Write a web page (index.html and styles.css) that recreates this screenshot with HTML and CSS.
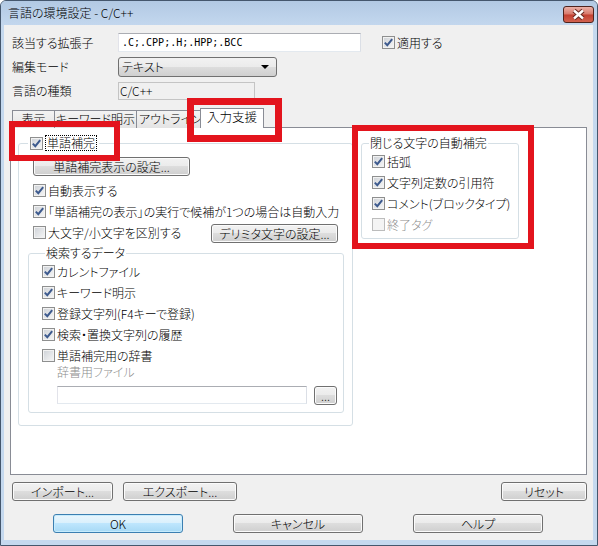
FILE: index.html
```html
<!DOCTYPE html>
<html lang="ja">
<head>
    <meta charset="UTF-8">
    <title>言語の環境設定 - C/C++</title>
    <link rel="stylesheet" href="styles.css">
</head>
<body>
    <div class="window">
        <div class="titlebar">
            <span class="title">言語の環境設定 - C/C++</span>
            <span class="close">
                <svg width="29" height="15" viewBox="0 0 29 15">
                    <path d="M10 3.5 L19 11.5 M19 3.5 L10 11.5" stroke="#6a2a22" stroke-width="4.5"/>
                    <path d="M10 3.5 L19 11.5 M19 3.5 L10 11.5" stroke="#fff" stroke-width="2.4"/>
                </svg>
            </span>
        </div>
        <div class="frame">
            <div class="client">
                <div class="fields">
                    <div class="row">
                        <span class="label">該当する拡張子</span>
                        <div class="textbox ext">.C;.CPP;.H;.HPP;.BCC</div>
                        <label class="check apply"><span class="cb"><svg width="11" height="11" viewBox="0 0 11 11"><path d="M1.8 5.6 L4.3 8.2 L9.2 2.2" fill="none" stroke="#3d5a8e" stroke-width="2"/></svg></span>適用する</label>
                    </div>
                    <div class="row">
                        <span class="label">編集モード</span>
                        <div class="combo"><span>テキスト</span><span class="arrow"></span></div>
                    </div>
                    <div class="row">
                        <span class="label">言語の種類</span>
                        <div class="readonly">C/C++</div>
                    </div>
                </div>

                <div class="tabs">
                    <div class="tab tab-view">表示</div>
                    <div class="tab tab-keyword">キーワード明示</div>
                    <div class="tab tab-outline">アウトライン</div>
                    <div class="tab tab-input active">入力支援</div>
                </div>

                <div class="panel">
                    <fieldset class="group group-word">
                        <legend>
                            <label class="check"><span class="cb"><svg width="11" height="11" viewBox="0 0 11 11"><path d="M1.8 5.6 L4.3 8.2 L9.2 2.2" fill="none" stroke="#3d5a8e" stroke-width="2"/></svg></span><span class="focus">単語補完</span></label>
                        </legend>
                        <button class="btn btn-wide">単語補完表示の設定...</button>
                        <div class="opts">
                            <label class="check"><span class="cb"><svg width="11" height="11" viewBox="0 0 11 11"><path d="M1.8 5.6 L4.3 8.2 L9.2 2.2" fill="none" stroke="#3d5a8e" stroke-width="2"/></svg></span>自動表示する</label>
                            <label class="check"><span class="cb"><svg width="11" height="11" viewBox="0 0 11 11"><path d="M1.8 5.6 L4.3 8.2 L9.2 2.2" fill="none" stroke="#3d5a8e" stroke-width="2"/></svg></span>「単語補完の表示」の実行で候補が1つの場合は自動入力</label>
                            <div class="check">
                                <span class="cb"></span>大文字/小文字を区別する
                                <button class="btn btn-delim">デリミタ文字の設定...</button>
                            </div>
                        </div>

                        <fieldset class="group group-search">
                            <legend>検索するデータ</legend>
                            <label class="check"><span class="cb"><svg width="11" height="11" viewBox="0 0 11 11"><path d="M1.8 5.6 L4.3 8.2 L9.2 2.2" fill="none" stroke="#3d5a8e" stroke-width="2"/></svg></span>カレントファイル</label>
                            <label class="check"><span class="cb"><svg width="11" height="11" viewBox="0 0 11 11"><path d="M1.8 5.6 L4.3 8.2 L9.2 2.2" fill="none" stroke="#3d5a8e" stroke-width="2"/></svg></span>キーワード明示</label>
                            <label class="check"><span class="cb"><svg width="11" height="11" viewBox="0 0 11 11"><path d="M1.8 5.6 L4.3 8.2 L9.2 2.2" fill="none" stroke="#3d5a8e" stroke-width="2"/></svg></span>登録文字列(F4キーで登録)</label>
                            <label class="check"><span class="cb"><svg width="11" height="11" viewBox="0 0 11 11"><path d="M1.8 5.6 L4.3 8.2 L9.2 2.2" fill="none" stroke="#3d5a8e" stroke-width="2"/></svg></span>検索・置換文字列の履歴</label>
                            <label class="check"><span class="cb"></span>単語補完用の辞書</label>
                            <div class="dict-label">辞書用ファイル</div>
                            <div class="dict-row">
                                <div class="textbox dict-input"></div>
                                <button class="btn btn-browse" disabled>...</button>
                            </div>
                        </fieldset>
                    </fieldset>

                    <fieldset class="group group-close">
                        <legend>閉じる文字の自動補完</legend>
                        <label class="check"><span class="cb"><svg width="11" height="11" viewBox="0 0 11 11"><path d="M1.8 5.6 L4.3 8.2 L9.2 2.2" fill="none" stroke="#3d5a8e" stroke-width="2"/></svg></span>括弧</label>
                        <label class="check"><span class="cb"><svg width="11" height="11" viewBox="0 0 11 11"><path d="M1.8 5.6 L4.3 8.2 L9.2 2.2" fill="none" stroke="#3d5a8e" stroke-width="2"/></svg></span>文字列定数の引用符</label>
                        <label class="check"><span class="cb"><svg width="11" height="11" viewBox="0 0 11 11"><path d="M1.8 5.6 L4.3 8.2 L9.2 2.2" fill="none" stroke="#3d5a8e" stroke-width="2"/></svg></span>コメント(ブロックタイプ)</label>
                        <label class="check disabled"><span class="cb"></span>終了タグ</label>
                    </fieldset>
                </div>

                <div class="footer-top">
                    <button class="btn btn-import">インポート...</button>
                    <button class="btn btn-export">エクスポート...</button>
                    <button class="btn btn-reset">リセット</button>
                </div>
                <div class="footer-bottom">
                    <button class="btn btn-main default">OK</button>
                    <button class="btn btn-main">キャンセル</button>
                    <button class="btn btn-main">ヘルプ</button>
                </div>
            </div>
        </div>

        <!-- annotation boxes -->
        <div class="mark mark-word"></div>
        <div class="mark mark-tab"></div>
        <div class="mark mark-close"></div>
    </div>
</body>
</html>
```

FILE: styles.css
```css
* {
    box-sizing: border-box;
}
body {
    margin: 0;
    font-family: "Noto Sans CJK JP", "Noto Sans", sans-serif;
    font-size: 12px;
    font-weight: 300;
    font-feature-settings: "palt";
    color: #000;
    background: #fff;
}
.window {
    position: relative;
    width: 598px;
    height: 546px;
    border: 1px solid #45576d;
    border-radius: 6px 6px 0 0;
    background: #c5d9ef;
    overflow: hidden;
}
.titlebar {
    height: 24px;
    display: flex;
    align-items: center;
    justify-content: space-between;
    padding: 0 3px 0 7px;
    background: linear-gradient(#b2c9e3, #c3d7ee);
}
.title {
    font-size: 12px;
    line-height: 16px;
}
.close {
    width: 31px;
    height: 17px;
    margin-top: 2px;
    border: 1px solid #4e231d;
    border-radius: 3px;
    background: linear-gradient(#eab1a7, #d8786a 48%, #c33f30 52%, #d2624f);
    display: flex;
}
.frame {
    padding: 0 4px 5px 3px;
}
.client {
    height: 515px;
    background: #f0f0f0;
    padding: 0 6px;
}

/* top fields */
.fields {
    padding: 8px 0 0 2px;
    display: flex;
    flex-direction: column;
    gap: 5px;
}
.row {
    display: flex;
    align-items: center;
    height: 19px;
}
.label {
    width: 106px;
    line-height: 16px;
}
.textbox {
    height: 19px;
    background: #fff;
    border: 1px solid;
    border-color: #abadb3 #dbdfe6 #e3e9ef #e2e3ea;
    padding: 0 3px;
    line-height: 17px;
}
.ext {
    width: 243px;
    font-family: "DejaVu Sans Mono", monospace;
    font-size: 10px;
    font-weight: normal;
}
.apply {
    margin-left: 21px;
}
.combo {
    width: 159px;
    height: 20px;
    border: 1px solid #707070;
    border-radius: 3px;
    background: linear-gradient(#f2f2f2, #ebebeb 49%, #dddddd 50%, #cfcfcf);
    display: flex;
    align-items: center;
    justify-content: space-between;
    padding: 0 7px 0 3px;
    line-height: 16px;
}
.arrow {
    border-left: 4px solid transparent;
    border-right: 4px solid transparent;
    border-top: 4px solid #000;
}
.readonly {
    width: 137px;
    height: 18px;
    border: 1px solid #c4c4c4;
    padding: 0 1px;
    line-height: 16px;
}

/* tabs */
.tabs {
    display: flex;
    align-items: flex-end;
    height: 20px;
    margin-top: 8px;
    padding-left: 2px;
}
.tab {
    height: 18px;
    border: 1px solid #898c95;
    border-bottom: none;
    background: linear-gradient(#f3f3f3, #e4e4e4);
    text-align: center;
    line-height: 16px;
    white-space: nowrap;
    margin-right: -1px;
}
.tab-view { width: 43px; }
.tab-keyword { width: 83px; }
.tab-outline { width: 65px; text-align: left; padding-left: 2px; }
.tab-input { width: 64px; }
.tab.active {
    height: 20px;
    background: #fff;
    position: relative;
    z-index: 1;
    font-size: 12.5px;
}

/* panel */
.panel {
    height: 348px;
    margin-top: -1px;
    border: 1px solid #898c95;
    background: #fff;
    display: flex;
    align-items: flex-start;
    gap: 8px;
    padding: 7px 0 0 7px;
}
.group {
    margin: 0;
    border: 1px solid #d5dfe5;
    border-radius: 3px;
}
.group legend {
    line-height: 16px;
    padding: 0 1px;
}
.group-word {
    width: 335px;
    padding: 0 8px 12px 9px;
}
.group-word > legend {
    padding: 0 2px;
}
.focus {
    border: 1px dotted #000;
    padding: 0 1px;
    line-height: 14px;
}
.btn-wide {
    width: 157px;
    height: 20px;
    margin: 6px 0 0 5px;
}
.opts {
    margin-top: 4px;
    padding-left: 5px;
}
.btn-delim {
    width: 127px;
    align-self: flex-end;
    margin: 0 6px 0 auto;
}
.group-search {
    margin-top: 2px;
    padding: 0 0 7px 13px;
}
.group-search legend {
    margin-left: 3px;
}
.dict-label {
    padding-left: 15px;
    line-height: 12px;
    color: #8d8d8d;
}
.dict-row {
    display: flex;
    gap: 7px;
    margin-top: 8px;
    padding-left: 15px;
}
.dict-input {
    width: 250px;
    height: 18px;
}
.btn-browse {
    width: 23px;
    height: 18px;
    color: #8d8d8d;
    border-color: #adb2b5;
    background: #f4f4f4;
    font-size: 10px;
}
.group-close {
    width: 158px;
    padding: 0 4px 3px 7px;
}
.group-close .check {
    padding-left: 3px;
}

/* checkboxes */
.check {
    display: flex;
    align-items: center;
    height: 21px;
    white-space: nowrap;
    line-height: 16px;
}
.cb {
    width: 13px;
    height: 13px;
    flex: none;
    margin-right: 2px;
    border: 1px solid #8e8f8f;
    background: linear-gradient(135deg, #cdd1d6, #f7f7f7);
    box-shadow: inset 0 0 0 1px #f2f2f2;
    display: flex;
}
.group legend .check {
    height: 16px;
}
.disabled {
    color: #8d8d8d;
}
.disabled .cb {
    border-color: #bcbcbc;
    background: #f4f4f4;
    box-shadow: none;
}

/* buttons */
.btn {
    height: 19px;
    padding: 0;
    font: inherit;
    color: #000;
    line-height: 16px;
    border: 1px solid #707070;
    border-radius: 3px;
    background: linear-gradient(#f2f2f2, #ebebeb 49%, #dddddd 50%, #cfcfcf);
    box-shadow: inset 0 0 0 1px #fbfbfb;
    display: flex;
    align-items: center;
    justify-content: center;
}
.btn.default {
    border-color: #3c7fb1;
    background: linear-gradient(#eaf6fd, #d9f0fc 49%, #bee6fd 50%, #a7d9f5);
    box-shadow: inset 0 0 0 1px #c7ecfd;
}
.footer-top {
    display: flex;
    gap: 10px;
    margin-top: 7px;
    padding-left: 2px;
}
.btn-import { width: 101px; }
.btn-export { width: 114px; }
.btn-reset {
    width: 86px;
    margin-left: auto;
}
.footer-bottom {
    display: flex;
    gap: 50px;
    margin-top: 13px;
    padding-left: 43px;
}
.btn-main {
    width: 130px;
}

/* red annotation frames */
.mark {
    position: absolute;
    border: 6px solid #e3141d;
}
.mark-word {
    left: 8px;
    top: 120px;
    width: 111px;
    height: 40px;
}
.mark-tab {
    left: 186px;
    top: 97px;
    width: 95px;
    height: 44px;
    border-width: 7px;
}
.mark-close {
    left: 351px;
    top: 124px;
    width: 182px;
    height: 124px;
}
```
